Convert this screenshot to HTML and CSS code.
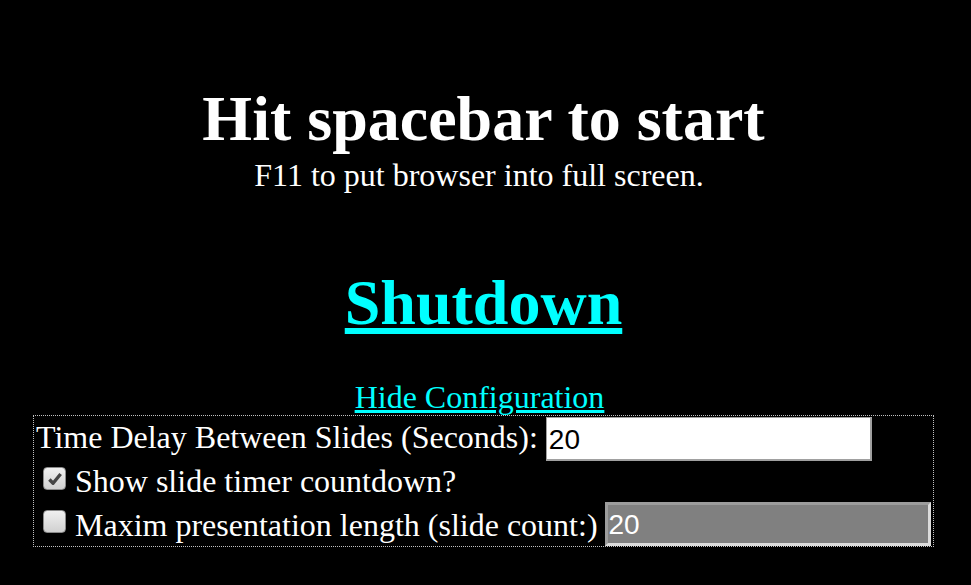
FILE: index.html
```html
<!DOCTYPE html>
<html>
<head>
<meta charset="utf-8">
<link rel="stylesheet" href="styles.css">
</head>
<body>
<div class="page">
  <h1 class="title">Hit spacebar to start</h1>
  <div class="subtitle">F11 to put browser into full screen.</div>
  <a class="shutdown" href="#">Shutdown</a>
  <a class="hide" href="#">Hide Configuration</a>
  <div class="config">
    <div class="row row-first">
      <span class="label">Time Delay Between Slides (Seconds):</span>
      <input class="field" type="text" value="20">
    </div>
    <div class="row row-check">
      <span class="box"><svg viewBox="0 0 16 16" width="18" height="18"><path d="M3 8.4 L6.3 11.8 L13 3.6" fill="none" stroke="#444" stroke-width="3" stroke-linejoin="round"/></svg></span>
      <span class="label">Show slide timer countdown?</span>
    </div>
    <div class="row row-check row-last">
      <span class="box"></span>
      <span class="label">Maxim presentation length (slide count:)</span>
      <input class="field disabled" type="text" value="20" disabled>
    </div>
  </div>
</div>
</body>
</html>
```
FILE: styles.css
```css
html, body {
  margin: 0;
  padding: 0;
  background: #000;
  color: #fff;
  font-family: "Liberation Serif", "Times New Roman", serif;
}
.page {
  display: flex;
  flex-direction: column;
  align-items: center;
  padding: 0 37px 0 33px;
}
.title {
  font-size: 64px;
  font-weight: bold;
  margin: 82px 0 0;
  line-height: 74px;
}
.subtitle {
  margin-top: 1px;
  margin-right: 9px;
  font-size: 32px;
  line-height: 36px;
}
.shutdown {
  margin-top: 73px;
  font-size: 64px;
  font-weight: bold;
  color: #0ff;
  line-height: 74px;
}
.hide {
  margin-top: 39px;
  margin-right: 8px;
  font-size: 32px;
  color: #0ff;
  line-height: 36px;
}
.config {
  width: 901px;
  box-sizing: border-box;
  align-self: flex-start;
  border: 1px dotted #c0c0c0;
  font-size: 32px;
  display: flex;
  flex-direction: column;
  align-items: flex-start;
  padding-top: 1px;
}
.row {
  display: flex;
  align-items: center;
  line-height: 36px;
  white-space: nowrap;
}
.row-first {
  padding-left: 2px;
  gap: 8px;
}
.row-first .label {
  margin-bottom: 5px;
}
.row-check {
  padding-left: 9px;
  margin-top: 2px;
}
.row-check .label {
  margin-left: 9px;
}
.row-last {
  margin-top: 3px;
  align-self: stretch;
}
.row-last .label {
  margin-top: 2px;
  margin-right: 7px;
}
.row-last .box {
  margin-bottom: 11px;
}
.row-check .box {
  margin-bottom: 5px;
}
.field {
  width: 326px;
  height: 44px;
  flex: none;
  box-sizing: border-box;
  font-family: "Liberation Sans", Arial, sans-serif;
  font-size: 28px;
  color: #000;
  background: #fff;
  border: 2px solid #a0a0a0;
  border-top-width: 1px;
  border-left-width: 1px;
  padding: 2px 2px 0;
  margin: 0;
  outline: none;
}
.field.disabled {
  background: #808080;
  color: #fff;
  border-style: solid;
  border-width: 3px;
  border-color: #9c9c9c #dcdcdc #dcdcdc #9c9c9c;
  padding: 2px 1px 0;
  -webkit-text-fill-color: #fff;
  opacity: 1;
}
.box {
  width: 23px;
  height: 23px;
  box-sizing: border-box;
  border: 1px solid #8a8a8a;
  border-radius: 4px;
  background: linear-gradient(#f0f0f0, #d0d0d0);
  display: flex;
  align-items: center;
  justify-content: center;
  flex: none;
}
```
